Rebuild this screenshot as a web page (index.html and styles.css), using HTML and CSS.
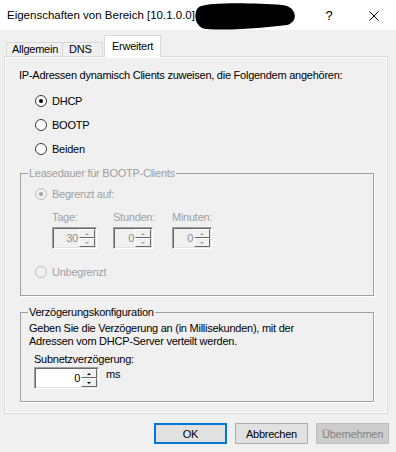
FILE: index.html
```html
<!DOCTYPE html>
<html lang="de">
<head>
<meta charset="utf-8">
<title>Eigenschaften von Bereich</title>
<link rel="stylesheet" href="styles.css">
</head>
<body>
<div class="titlebar">
  <span class="title">Eigenschaften von Bereich [10.1.0.0]</span>
  <svg class="redact" width="104" height="28" viewBox="0 0 104 28"><path d="M5 5 C 14 0, 60 1, 88 3 C 103 4, 105 20, 93 23 C 72 25, 42 29, 12 27 C 0 26, -1 9, 5 5 Z" fill="#000"/></svg>
  <span class="help">?</span>
  <span class="close"><svg width="10" height="10" viewBox="0 0 10 10"><path d="M0.5 0.5 L9.5 9.5 M9.5 0.5 L0.5 9.5" stroke="#000" stroke-width="1" fill="none"/></svg></span>
</div>

<div class="tabs">
  <div class="tab t-allg">Allgemein</div>
  <div class="tab t-dns">DNS</div>
  <div class="tab t-erw active">Erweitert</div>
</div>

<div class="panel">
  <div class="intro">IP-Adressen dynamisch Clients zuweisen, die Folgendem angehören:</div>
  <div class="radios">
    <div class="radio"><span class="dot on"></span><span>DHCP</span></div>
    <div class="radio"><span class="dot"></span><span>BOOTP</span></div>
    <div class="radio"><span class="dot"></span><span>Beiden</span></div>
  </div>

  <fieldset class="group group-lease disabled">
    <legend>Leasedauer für BOOTP-Clients</legend>
    <div class="lease-body">
      <div class="radio"><span class="dot on"></span><span>Begrenzt auf:</span></div>
      <div class="durations">
        <div class="col c1">
          <div class="lbl">Tage:</div>
          <div class="spin w45"><span class="val">30</span><span class="btns"><span class="up"></span><span class="down"></span></span></div>
        </div>
        <div class="col c2">
          <div class="lbl">Stunden:</div>
          <div class="spin w40"><span class="val">0</span><span class="btns"><span class="up"></span><span class="down"></span></span></div>
        </div>
        <div class="col c3">
          <div class="lbl">Minuten:</div>
          <div class="spin w40"><span class="val">0</span><span class="btns"><span class="up"></span><span class="down"></span></span></div>
        </div>
      </div>
      <div class="radio unb"><span class="dot"></span><span>Unbegrenzt</span></div>
    </div>
  </fieldset>

  <fieldset class="group group-delay">
    <legend>Verzögerungskonfiguration</legend>
    <div class="delay-body">
      <div class="desc">Geben Sie die Verzögerung an (in Millisekunden), mit der<br>Adressen vom DHCP-Server verteilt werden.</div>
      <div class="sublbl">Subnetzverzögerung:</div>
      <div class="delay-row">
        <div class="spin w65 enabled"><span class="val">0</span><span class="btns"><span class="up"></span><span class="down"></span></span></div>
        <span class="ms">ms</span>
      </div>
    </div>
  </fieldset>
</div>

<div class="buttons">
  <button class="btn default">OK</button>
  <button class="btn">Abbrechen</button>
  <button class="btn off">Übernehmen</button>
</div>
</body>
</html>
```

FILE: styles.css
```css
* { box-sizing: border-box; }
html, body { margin: 0; padding: 0; }
body {
  width: 396px;
  height: 452px;
  overflow: hidden;
  background: #f0f0f0;
  font-family: "Liberation Sans", Arial, sans-serif;
  font-size: 11px;
  line-height: 13px;
  letter-spacing: -0.25px;
  color: #000;
}

/* title bar */
.titlebar {
  height: 30px;
  background: #fff;
  display: flex;
  align-items: center;
  letter-spacing: 0;
}
.title {
  padding-left: 7px;
  font-size: 11.5px;
  white-space: nowrap;
}
.redact {
  align-self: flex-start;
  margin-top: 2px;
  margin-left: -1px;
  flex: none;
}
.help {
  margin-left: auto;
  width: 46px;
  text-align: center;
  font-size: 13px;
  line-height: 16px;
  padding-top: 1px;
}
.close {
  width: 44px;
  display: flex;
  justify-content: center;
  padding-top: 1px;
}

/* tabs */
.tabs {
  height: 27px;
  display: flex;
  align-items: flex-end;
  padding-left: 6px;
}
.tab {
  position: relative;
  height: 15px;
  border: 1px solid #d9d9d9;
  background: #f0f0f0;
  line-height: 12px;
  white-space: nowrap;
}
.t-allg { width: 57px; padding-left: 5px; }
.t-dns { width: 41px; padding-left: 6px; margin-left: -1px; }
.tab.active {
  z-index: 2;
  height: 22px;
  width: 57px;
  margin-left: 1px;
  padding-left: 7px;
  padding-top: 4px;
  border-bottom: none;
  background: #fff;
}

/* panel */
.panel {
  margin: -1px 8px 0 4px;
  height: 358px;
  border: 1px solid #d9d9d9;
  box-shadow: inset 0 0 0 1px #fff;
  padding: 12px 12px 0 15px;
}
.intro { margin-left: -1px; white-space: nowrap; }
.radios { margin-top: 7px; }
.radio {
  display: flex;
  align-items: center;
  height: 24px;
  padding-left: 15px;
}
.dot {
  flex: none;
  width: 12px;
  height: 12px;
  margin-right: 5px;
  border-radius: 50%;
  border: 1px solid #3a3a3a;
  background: #fff;
  display: flex;
  align-items: center;
  justify-content: center;
}
.dot.on::after {
  content: "";
  width: 4px;
  height: 4px;
  border-radius: 50%;
  background: #000;
}

/* group boxes */
.group {
  margin: 0 1px 0 0;
  padding: 0;
  min-width: 0;
  border: 1px solid #a0a0a0;
  box-shadow: 1px 1px 0 #fff;
}
.group legend {
  margin-left: 7px;
  padding: 0 1px;
  line-height: 13px;
}
.group-lease { margin-top: 6px; }
.group-delay { margin-top: 10px; }

.disabled { color: #a0a0a0; }
.disabled .dot { border-color: #bcbcbc; background: #f0f0f0; }
.disabled .dot.on::after { background: #a0a0a0; }

.lease-body { padding: 2px 0 11px 0; }
.lease-body .radio { padding-left: 14px; }
.durations { display: flex; margin-top: 5px; }
.col { display: flex; flex-direction: column; }
.c1 { margin-left: 31px; width: 61px; }
.c2 { width: 59px; }
.lbl { height: 13px; margin-bottom: 3px; }
.radio.unb { margin-top: 11px; }

/* spinner */
.spin {
  height: 22px;
  display: flex;
  border: 1px solid;
  border-color: #a0a0a0 #fff #fff #a0a0a0;
  box-shadow: inset 1px 1px 0 #696969, inset -1px -1px 0 #e3e3e3;
  padding: 1px 1px 1px 2px;
  background: #f0f0f0;
}
.w45 { width: 45px; }
.w40 { width: 40px; }
.w65 { width: 65px; }
.spin .val {
  flex: 1;
  text-align: right;
  line-height: 18px;
  padding-right: 1px;
  color: #8f8f8f;
}
.spin.enabled .val { color: #000; }
.spin .btns {
  width: 16px;
  display: flex;
  flex-direction: column;
}
.spin .btns span {
  flex: 1;
  background: #f0f0f0;
  border: 1px solid;
  border-color: #fff #696969 #696969 #fff;
  display: flex;
  align-items: center;
  justify-content: center;
}
.spin .up::after,
.spin .down::after {
  content: "";
  width: 0;
  height: 0;
  border-left: 2px solid transparent;
  border-right: 2px solid transparent;
}
.spin .up::after { border-bottom: 2px solid #a0a0a0; }
.spin .down::after { border-top: 2px solid #a0a0a0; }
.spin.enabled { background: #fff; }
.spin.enabled .up::after { border-bottom-color: #000; }
.spin.enabled .down::after { border-top-color: #000; }

.delay-body { padding: 3px 8px 12px 8px; }
.sublbl { margin-top: 5px; padding-left: 5px; }
.delay-row {
  display: flex;
  align-items: flex-start;
  margin-top: 1px;
  padding-left: 5px;
}
.ms { margin-left: 7px; margin-top: 1px; }

/* buttons */
.buttons {
  display: flex;
  justify-content: flex-end;
  gap: 8px;
  margin-top: 9px;
  padding-right: 7px;
}
.btn {
  width: 73px;
  height: 21px;
  padding: 0;
  background: #e1e1e1;
  border: 1px solid #adadad;
  font-family: "Liberation Sans", Arial, sans-serif;
  font-size: 11px;
  letter-spacing: -0.25px;
  color: #000;
  display: flex;
  align-items: center;
  justify-content: center;
}
.btn.default { border: 2px solid #0078d7; }
.btn.off { background: #cccccc; border-color: #bfbfbf; color: #838383; }
```
